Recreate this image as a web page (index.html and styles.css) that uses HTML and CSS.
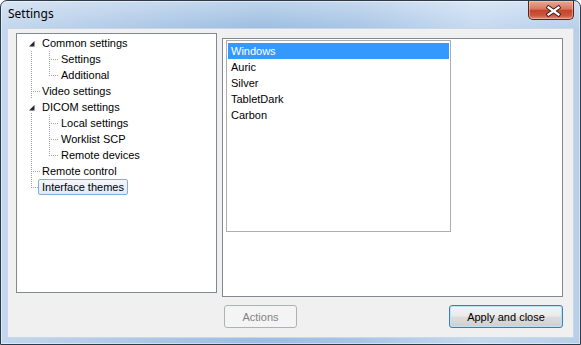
FILE: index.html
```html
<!DOCTYPE html>
<html lang="en">
<head>
  <meta charset="UTF-8" />
  <meta name="viewport" content="width=device-width, initial-scale=1.0"/>
  <title>Settings</title>
  <link rel="stylesheet" href="styles.css">
</head>
<body>
  <div class="window">
    <div class="titlebar">
      <span class="title">Settings</span>
      <button class="close-btn" title="Close">
        <svg width="44" height="17" viewBox="0 0 44 17">
          <path d="M19.5 5.5 L29.5 12.5 M29.5 5.5 L19.5 12.5" stroke="#3d1c17" stroke-width="4" stroke-linecap="square"/>
          <path d="M19.5 5.5 L29.5 12.5 M29.5 5.5 L19.5 12.5" stroke="#ffffff" stroke-width="2.2" stroke-linecap="square"/>
        </svg>
      </button>
    </div>

    <div class="client">
      <div class="tree">
        <!-- connector lines and expand arrows -->
        <svg class="tree-lines" width="199" height="258">
          <g stroke="#a0a0a0" stroke-width="1" stroke-dasharray="1 1" fill="none">
            <path d="M14.5 17 V65 M14.5 79 V154"/>
            <path d="M14 57.5 H23 M14 137.5 H23 M14 153.5 H21"/>
            <path d="M32.5 17 V42 M32.5 81 V122"/>
            <path d="M32 25.5 H41 M32 41.5 H41 M32 89.5 H41 M32 105.5 H41 M32 121.5 H41"/>
          </g>
          <path d="M17.5 7 V12.5 H12 Z" fill="#262626"/>
          <path d="M17.5 71 V76.5 H12 Z" fill="#262626"/>
        </svg>
        <div class="node"><span class="label">Common settings</span></div>
        <div class="node child"><span class="label">Settings</span></div>
        <div class="node child"><span class="label">Additional</span></div>
        <div class="node"><span class="label">Video settings</span></div>
        <div class="node"><span class="label">DICOM settings</span></div>
        <div class="node child"><span class="label">Local settings</span></div>
        <div class="node child"><span class="label">Worklist SCP</span></div>
        <div class="node child"><span class="label">Remote devices</span></div>
        <div class="node"><span class="label">Remote control</span></div>
        <div class="node"><span class="label selected">Interface themes</span></div>
      </div>

      <div class="side">
        <div class="panel">
          <div class="listbox">
            <div class="item selected">Windows</div>
            <div class="item">Auric</div>
            <div class="item">Silver</div>
            <div class="item">TabletDark</div>
            <div class="item">Carbon</div>
          </div>
        </div>
        <div class="buttons">
          <button class="btn btn-actions" disabled>Actions</button>
          <button class="btn btn-default">Apply and close</button>
        </div>
      </div>
    </div>
  </div>
</body>
</html>
```

FILE: styles.css
```css
body {
  margin: 0;
  font-family: 'Liberation Sans', Arial, sans-serif;
  font-size: 11px;
  background: #ffffff;
}

.window {
  width: 581px;
  height: 345px;
  box-sizing: border-box;
  border: 1px solid #2d3a4a;
  border-radius: 7px 7px 0 0;
  padding: 0 6px 6px 6px;
  display: flex;
  flex-direction: column;
  overflow: hidden;
  background:
    linear-gradient(to bottom, rgba(255, 255, 255, 0.35), rgba(255, 255, 255, 0) 28px),
    linear-gradient(to right, #c3d7ee 0%, #afc9e7 22%, #9cbde1 45%, #a8c5e6 62%, #c5daf0 82%, #b7cfea 100%);
  box-shadow: inset 0 0 0 1px rgba(255, 255, 255, 0.45);
}

.titlebar {
  height: 27px;
  display: flex;
  align-items: flex-start;
}

.title {
  font-family: 'Noto Sans', 'Open Sans', sans-serif;
  font-size: 12px;
  line-height: 16px;
  padding: 5px 0 0 1px;
  color: #000;
}

.close-btn {
  margin-left: auto;
  width: 46px;
  height: 19px;
  padding: 0;
  border: 1px solid #5a2219;
  border-top: none;
  border-radius: 0 0 5px 5px;
  background: linear-gradient(to bottom, #e9a897 0%, #d9765f 45%, #c4442c 52%, #cc563e 80%, #e08a71 100%);
  box-shadow: inset 0 0 0 1px rgba(255, 220, 210, 0.45);
  display: flex;
  align-items: center;
  justify-content: center;
}

.client {
  flex: 1;
  border: 1px solid #c9d7e6;
  background: #f0f0f0;
  padding: 4px 10px 0 8px;
  display: flex;
  align-items: flex-start;
  gap: 5px;
}

.tree {
  position: relative;
  width: 201px;
  height: 260px;
  box-sizing: border-box;
  border: 1px solid #828790;
  background: #ffffff;
  padding-top: 1px;
}

.tree-lines {
  position: absolute;
  left: 0;
  top: 0;
}

.node {
  height: 16px;
  padding-left: 21px;
}

.node.child {
  padding-left: 40px;
}

.label {
  display: inline-block;
  height: 14px;
  line-height: 14px;
  padding: 0 3px;
  border: 1px solid transparent;
  border-radius: 2px;
  color: #000;
  white-space: nowrap;
}

.label.selected {
  border-color: #84acdd;
  background: linear-gradient(to bottom, #f2f7fe, #dfeafa);
}

.side {
  width: 341px;
  margin-top: 5px;
  display: flex;
  flex-direction: column;
}

.panel {
  height: 259px;
  box-sizing: border-box;
  border: 1px solid #828790;
  background: #ffffff;
  padding: 1px 0 0 3px;
}

.listbox {
  width: 225px;
  height: 192px;
  box-sizing: border-box;
  border: 1px solid #abadb3;
  padding: 2px 1px 0 1px;
}

.item {
  height: 16px;
  line-height: 16px;
  padding-left: 3px;
  color: #000;
}

.item.selected {
  background: #3399ff;
  color: #ffffff;
}

.buttons {
  margin-top: 8px;
  display: flex;
  justify-content: space-between;
  padding-left: 2px;
}

.btn {
  height: 23px;
  font-family: 'Liberation Sans', Arial, sans-serif;
  font-size: 11px;
  border-radius: 3px;
  padding: 0;
  cursor: pointer;
}

.btn-actions {
  width: 73px;
  border: 1px solid #adb2b5;
  background: #f4f4f4;
  color: #838383;
  cursor: default;
}

.btn-default {
  width: 114px;
  border: 1px solid #3c7fb1;
  background: linear-gradient(to bottom, #f2f2f2 0%, #ebebeb 48%, #dddddd 52%, #cfcfcf 100%);
  box-shadow: inset 0 0 0 1px #b9e4f7;
  color: #000;
}
```
